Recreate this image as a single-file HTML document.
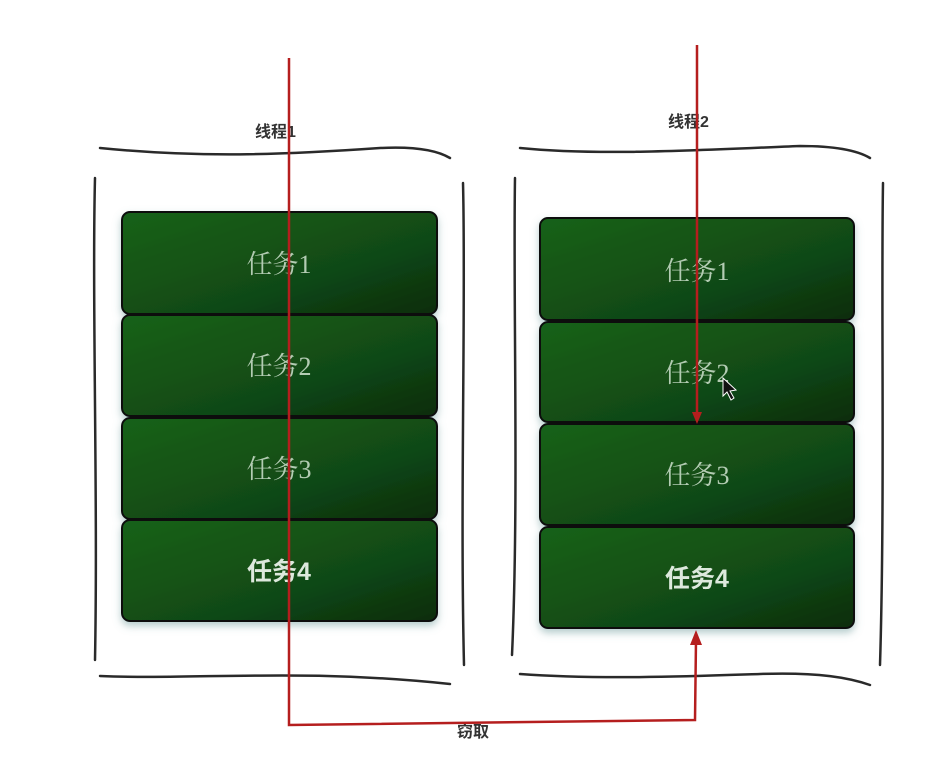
<!DOCTYPE html>
<html><head><meta charset="utf-8"><style>
html,body{margin:0;padding:0;background:#fff;}
svg{display:block}
</style></head><body>
<svg width="950" height="771" viewBox="0 0 950 771" xmlns="http://www.w3.org/2000/svg">
<defs>
<linearGradient id="g" x1="0" y1="0" x2="1" y2="1">
<stop offset="0" stop-color="#17621a"/><stop offset="0.6" stop-color="#114a14"/><stop offset="1" stop-color="#0b2c0e"/>
</linearGradient>
<filter id="sh" x="-10%" y="-10%" width="120%" height="130%"><feDropShadow dx="0" dy="4" stdDeviation="4" flood-color="#6a9a9a" flood-opacity="0.5"/></filter>
</defs>
<g fill="none" stroke="#2a2a2a" stroke-width="2.5" stroke-linecap="round">
<path d="M100 148 C 200 158, 280 155, 380 148 C 420 146, 440 152, 450 158"/>
<path d="M95 178 C 92 300, 98 500, 95 660"/>
<path d="M463 183 C 466 300, 460 500, 464 665"/>
<path d="M100 676 C 200 680, 300 668, 450 684"/>
<path d="M520 148 C 600 156, 700 150, 800 146 C 840 146, 860 152, 870 158"/>
<path d="M515 178 C 513 300, 519 500, 512 655"/>
<path d="M883 183 C 881 300, 885 500, 880 665"/>
<path d="M520 674 C 600 680, 700 676, 760 674 C 820 672, 850 678, 870 685"/>
</g>
<g font-family="Liberation Sans, Noto Sans CJK SC, sans-serif" font-weight="bold" font-size="16" fill="#333">
<text x="255" y="137">线程1</text>
<text x="668" y="127">线程2</text>
<text x="457" y="737">窃取</text>
</g>
<g filter="url(#sh)" stroke="#080f08" stroke-width="2">
<rect x="122" y="212" width="315" height="102" rx="8" fill="url(#g)"/>
<rect x="122" y="315" width="315" height="101" rx="8" fill="url(#g)"/>
<rect x="122" y="418" width="315" height="101" rx="8" fill="url(#g)"/>
<rect x="122" y="520" width="315" height="101" rx="8" fill="url(#g)"/>
<rect x="540" y="218" width="314" height="102" rx="8" fill="url(#g)"/>
<rect x="540" y="322" width="314" height="100" rx="8" fill="url(#g)"/>
<rect x="540" y="424" width="314" height="101" rx="8" fill="url(#g)"/>
<rect x="540" y="527" width="314" height="101" rx="8" fill="url(#g)"/>
</g>
<g font-family="Liberation Serif, Noto Serif CJK SC, serif" font-size="26" fill="#b3ccb3" text-anchor="middle">
<text x="279" y="273">任务1</text>
<text x="279" y="375">任务2</text>
<text x="279" y="478">任务3</text>
<text x="697" y="280">任务1</text>
<text x="697" y="382">任务2</text>
<text x="697" y="484">任务3</text>
</g>
<g font-family="Liberation Sans, Noto Sans CJK SC, sans-serif" font-weight="bold" font-size="25" fill="#dde9dd" text-anchor="middle">
<text x="279" y="580">任务4</text>
<text x="697" y="587">任务4</text>
</g>
<g fill="none" stroke="#b51e1e" stroke-width="2.5">
<path d="M289 58 L289 725 L695 720 L696 640"/>
<path d="M697 45 L697 415"/>
</g>
<path d="M690 645 L696 630 L702 645 Z" fill="#b51e1e"/>
<path d="M692 412 L697 424 L702 412 Z" fill="#b51e1e"/>
<path d="M723 378 L723 396 L727 392 L731 400 L734 398 L730 391 L736 390 Z" fill="#111" stroke="#fff" stroke-width="1"/>
</svg>
</body></html>
